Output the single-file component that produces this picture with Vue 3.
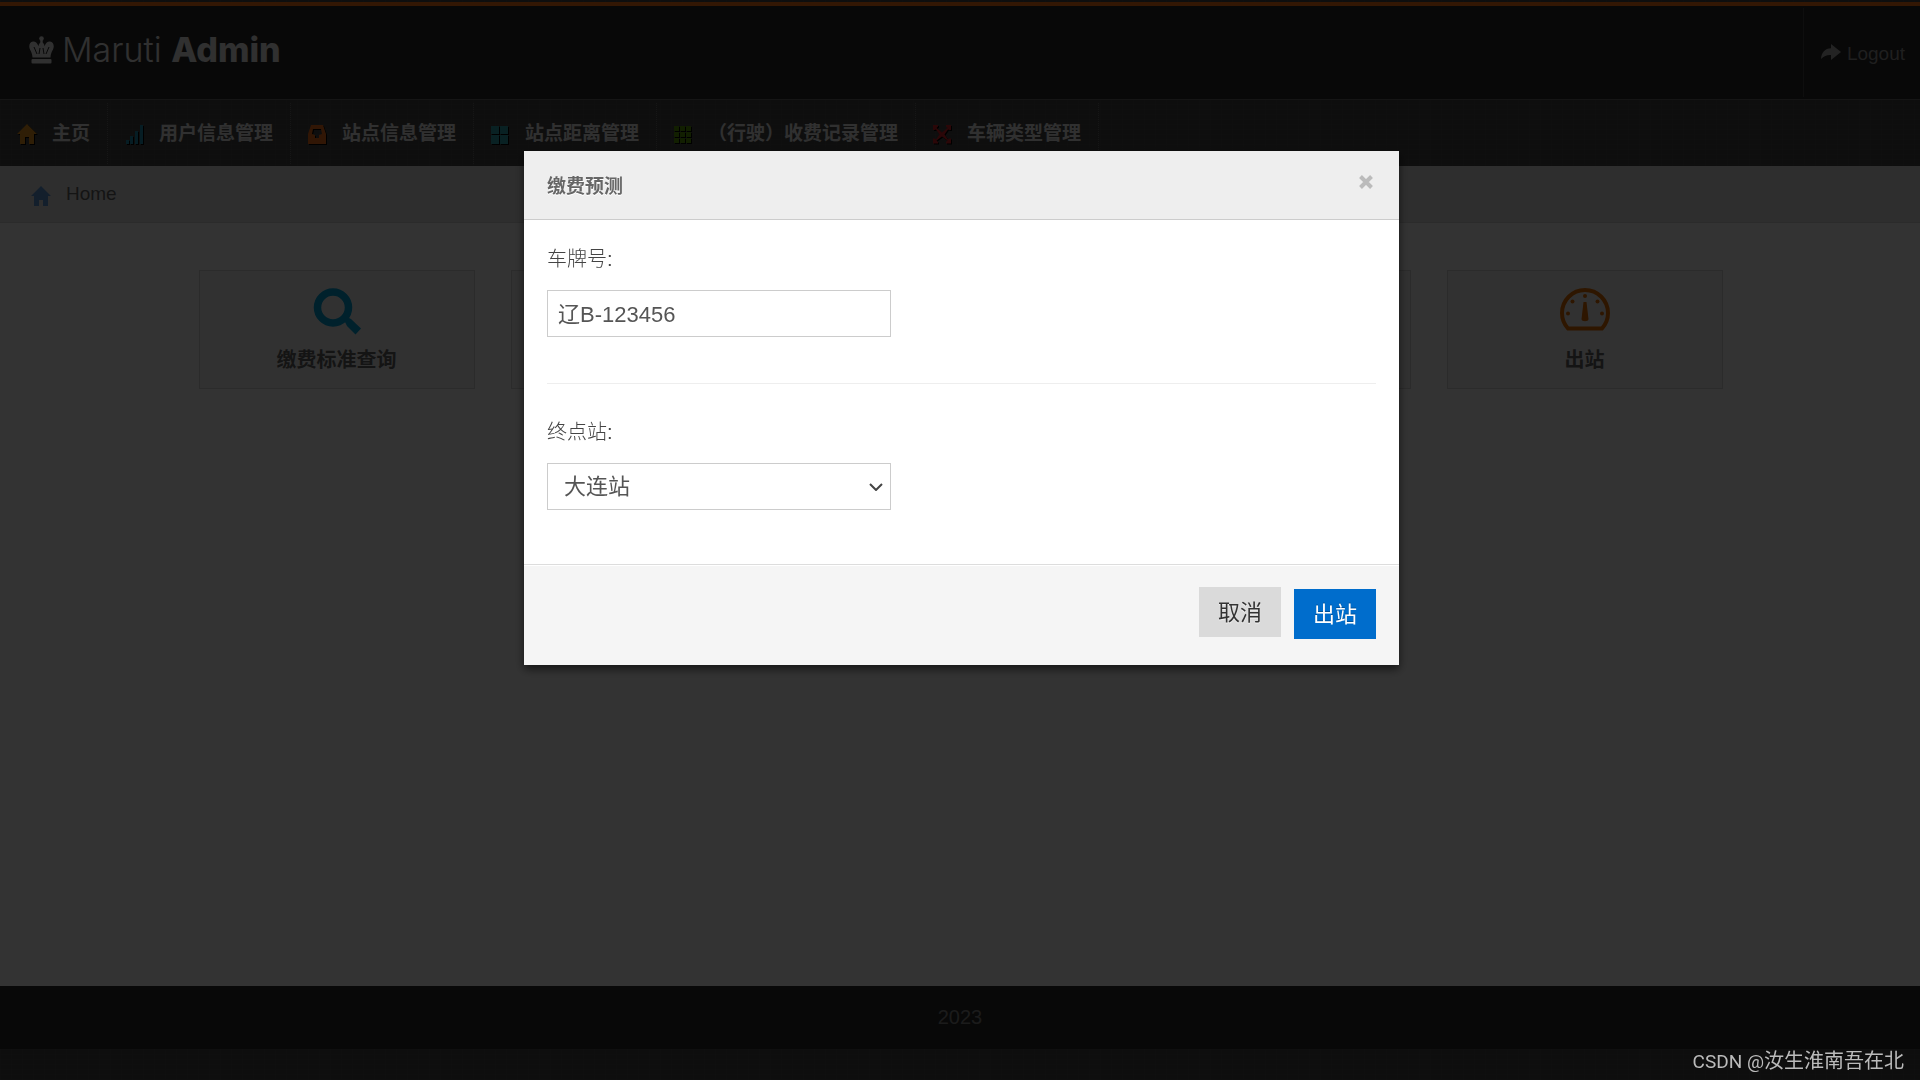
<script setup>
import { ref } from 'vue'

const navItems = [
  { label: '主页', icon: 'home' },
  { label: '用户信息管理', icon: 'signal' },
  { label: '站点信息管理', icon: 'inbox' },
  { label: '站点距离管理', icon: 'grid4' },
  { label: '（行驶）收费记录管理', icon: 'grid9' },
  { label: '车辆类型管理', icon: 'expand' }
]

const tiles = [
  { label: '缴费标准查询', icon: 'search' },
  {},
  {},
  {},
  { label: '出站', icon: 'gauge' }
]

const plate = ref('辽B-123456')
const stations = ['大连站']
const station = ref('大连站')
</script>

<template>
  <div class="page">
    <header class="header">
      <h1 class="logo">
        <svg class="crown" viewBox="0 0 25 28" aria-hidden="true">
          <circle cx="12.5" cy="2.5" r="2.3" />
          <path d="M11.3 3h2.4v5h-2.4z" />
          <path d="M12.5 6c2 1 3 2.600 3 4.200C17 6.500 19 5.200 21 5.500c3 .4 4.300 3.500 3.500 6.500-.7 2.700-2.700 4.300-3 9.500h-18C3.200 16.300 1.200 14.700.5 12-.3 9 1 5.900 4 5.500c2-.3 4 1 5.500 4.700C9.500 8.600 10.500 7 12.500 6z" />
          <path class="cut" d="M5 11l3 7M11 12l-1 6M14 12l1 6M20 11l-3 7" />
          <rect x="2.500" y="23" width="20" height="4.500" rx="1" />
        </svg>
        <span>Maruti <b>Admin</b></span>
      </h1>
      <a class="logout" href="#">
        <svg viewBox="0 0 20 16" aria-hidden="true">
          <path d="M10 0l10 8-10 8v-5c-4-.2-7 .8-10 4C.5 8 4 4.500 10 4.200z" />
        </svg>
        Logout
      </a>
    </header>

    <nav class="nav">
      <a v-for="item in navItems" :key="item.label" class="nav-item" href="#">
        <svg :class="['nav-icon', item.icon]" viewBox="0 0 20 20" aria-hidden="true">
          <path v-if="item.icon === 'home'" d="M10 0l10 10h-3v10h-5v-7H8v7H3V10H0z" />
          <path v-else-if="item.icon === 'signal'" d="M2 16h3v4H2zM6 12h3v8H6zM11 7h3v13h-3zM16 1h3v19h-3z" />
          <path v-else-if="item.icon === 'inbox'" fill-rule="evenodd" d="M4 1h12l3 9v10H1V10zM6 5L5 10l3 1v3h4v-3l3-1-1-5z" />
          <path v-else-if="item.icon === 'grid4'" d="M1 2h8v8H1zM10 2h8v8h-8zM1 11h8v9H1zM10 11h8v9h-8z" />
          <path v-else-if="item.icon === 'grid9'" d="M1 2h5v5H1zM7 2h5v5H7zM13 2h5v5h-5zM1 8h5v5H1zM7 8h5v5H7zM13 8h5v5h-5zM1 14h5v5H1zM7 14h5v5H7zM13 14h5v5h-5z" />
          <path v-else d="M1 1h5v1.500L4.500 4 10 8.500 15.500 4 14 2.500V1h5v5h-1.500L16 5.500 12.500 10.500 16 15.500l1.500-1H19v5h-5V18l1.500-1.500L10 12.500l-5.500 4L6 18v1.500H1v-5h1.500l1.500 1 3.500-5L4 5.500 2.500 6H1z" />
        </svg>
        {{ item.label }}
      </a>
    </nav>

    <div class="breadcrumb">
      <a href="#">
        <svg class="crumb-icon" viewBox="0 0 20 20" aria-hidden="true">
          <path d="M10 0l10 10h-3v10h-5v-6H8v6H3V10H0z" />
        </svg>
        Home
      </a>
    </div>

    <main class="content">
      <ul class="tiles">
        <li v-for="(tile, i) in tiles" :key="i" class="tile">
          <a v-if="tile.label" href="#">
            <svg v-if="tile.icon === 'search'" class="tile-icon" viewBox="0 0 50 50" aria-hidden="true">
              <circle cx="21" cy="21.500" r="15.500" fill="none" stroke="#00a3d9" stroke-width="7.500" />
              <path d="M32 34l3-3 4 2 10 9.500-5.500 6L35 40z" fill="#00a3d9" />
            </svg>
            <svg v-else class="tile-icon" viewBox="0 0 50 50" aria-hidden="true">
              <path d="M8 42.500C4 38 2 32.500 2 27a23 23 0 0 1 46 0c0 5.500-2 11-6 15.500z" fill="none" stroke="#e66f00" stroke-width="4" />
              <path d="M23.500 16h3l2 17c.2 3-7.200 3-7 0z" fill="#e66f00" />
              <g fill="#e66f00">
                <circle cx="25" cy="10" r="2" />
                <circle cx="12.500" cy="15.500" r="2" />
                <circle cx="37.500" cy="15.500" r="2" />
                <circle cx="8" cy="27.500" r="2" />
                <circle cx="42" cy="27.500" r="2" />
              </g>
            </svg>
            {{ tile.label }}
          </a>
        </li>
      </ul>
    </main>

    <footer class="footer">2023</footer>
  </div>

  <div class="backdrop"></div>

  <form class="modal" role="dialog" aria-labelledby="modal-title" @submit.prevent>
    <div class="modal-header">
      <h2 id="modal-title">缴费预测</h2>
      <button class="close" type="button" aria-label="关闭">
        <svg viewBox="0 0 14 14" aria-hidden="true"><path d="M1.500 1.500l11 11M12.500 1.500l-11 11" /></svg>
      </button>
    </div>
    <div class="modal-body">
      <label for="plate">车牌号:</label>
      <input id="plate" v-model="plate" class="control" type="text" />
      <hr />
      <label for="station">终点站:</label>
      <div class="select-wrap">
        <select id="station" v-model="station" class="control">
          <option v-for="s in stations" :key="s">{{ s }}</option>
        </select>
        <svg class="chevron" viewBox="0 0 14 8" aria-hidden="true"><path d="M1 1l6 6 6-6" /></svg>
      </div>
    </div>
    <div class="modal-footer">
      <button class="btn" type="button">取消</button>
      <button class="btn primary" type="submit">出站</button>
    </div>
  </form>

  <div class="watermark"><span>CSDN @</span>汝生淮南吾在北</div>
</template>

<style>
body {
  background: #484848;
}
</style>

<style scoped>
.page,
.modal,
.watermark {
  font-family: "Liberation Sans", "Noto Sans CJK SC", sans-serif;
  box-sizing: border-box;
}

.page {
  display: flex;
  flex-direction: column;
  min-height: 100vh;
  padding: 2px 0 31px;
  background-color: #484848;
  background-image:
    repeating-linear-gradient(0deg, rgba(255, 255, 255, 0.02) 0 1px, transparent 1px 5px),
    repeating-linear-gradient(90deg, rgba(255, 255, 255, 0.02) 0 1px, transparent 1px 11px);
}

a {
  color: inherit;
  text-decoration: none;
}

.header {
  display: flex;
  justify-content: space-between;
  height: 93px;
  border-top: 4px solid #ff7614;
  border-bottom: 1px solid #686868;
  background: #282828;
}

.logo {
  display: flex;
  align-items: center;
  gap: 8px;
  margin: 0 0 6px 29px;
  font-family: Inter, sans-serif;
  font-size: 34px;
  font-weight: 300;
  color: #efefef;
}

.logo b {
  font-weight: 800;
}

.crown {
  width: 25px;
  height: 28px;
  fill: #efefef;
}

.crown .cut {
  fill: none;
  stroke: #282828;
  stroke-width: 1;
}

.logout {
  display: flex;
  align-items: center;
  gap: 6px;
  margin: 2px 0;
  padding: 2px 15px 0 17px;
  border-left: 1px solid #484848;
  font-size: 19px;
  color: #999;
}

.logout svg {
  width: 20px;
  height: 16px;
  margin-bottom: 4px;
  fill: #b0b0b0;
}

.nav {
  display: flex;
  height: 66px;
  padding-left: 1px;
}

.nav-item {
  display: flex;
  align-items: center;
  gap: 15px;
  margin: 3px 0 2px;
  padding: 0 17px 4px 16px;
  border-right: 1px dotted #707070;
  font-size: 19px;
  font-weight: 700;
  color: #efefef;
}

.nav-icon {
  width: 20px;
  height: 20px;
  margin-top: 5px;
  filter: drop-shadow(1px 1px 0 #000);
}

.home { fill: #e8961e; }
.signal { fill: #1e91b4; }
.inbox { fill: #f2711c; }
.grid4 { fill: #2fa6ae; }
.grid9 { fill: #5a9a08; }
.expand { fill: #d8232a; }

.breadcrumb {
  height: 56px;
  border-bottom: 1px solid #d8d8d8;
  background: #e6e6e6;
}

.breadcrumb a {
  display: inline-flex;
  align-items: center;
  gap: 15px;
  height: 56px;
  padding-left: 31px;
  font-size: 19px;
  color: #666;
}

.crumb-icon {
  width: 20px;
  height: 20px;
  margin-top: 4px;
  fill: #5f9bdc;
}

.content {
  flex: 1;
  padding-top: 47px;
  background: #fff;
}

.tiles {
  display: flex;
  justify-content: center;
  gap: 36px;
  margin: 0;
  padding: 0 0 0 1px;
  list-style: none;
}

.tile {
  box-sizing: border-box;
  width: 276px;
  height: 119px;
  border: 1px solid #d8d8d8;
  background: #f5f5f5;
}

.tile a {
  display: flex;
  flex-direction: column;
  align-items: center;
  padding-top: 15px;
  font-size: 20px;
  font-weight: 700;
  line-height: 24px;
  color: #666;
}

.tile-icon {
  width: 50px;
  height: 50px;
  margin-bottom: 12px;
}

.footer {
  height: 63px;
  background: #282828;
  font-size: 20px;
  line-height: 62px;
  text-align: center;
  color: #888;
}

.backdrop {
  position: fixed;
  inset: 0;
  background: rgba(0, 0, 0, 0.8);
}

.modal {
  position: fixed;
  top: 151px;
  left: 50%;
  width: 875px;
  margin-left: -436px;
  background: #fff;
  box-shadow: 0 4px 9px rgba(0, 0, 0, 0.6);
}

.modal-header {
  display: flex;
  justify-content: space-between;
  align-items: flex-start;
  height: 68px;
  padding: 0 23px;
  border-bottom: 1px solid #ccc;
  background: #eee;
}

.modal-header h2 {
  margin: 0;
  font-size: 19px;
  line-height: 72px;
  color: #666;
  text-shadow: 0 1px 0 #fff;
}

.close {
  width: 20px;
  height: 20px;
  margin-top: 21px;
  padding: 3px;
  border: 0;
  background: none;
}

.close svg {
  display: block;
  width: 14px;
  height: 14px;
  fill: none;
  stroke: #bbb;
  stroke-width: 4;
}

.modal-body {
  padding: 24px 23px 54px;
}

.modal-body label {
  display: block;
  margin-bottom: 16px;
  font-size: 20px;
  font-weight: 300;
  line-height: 30px;
  color: #444;
}

.control {
  display: block;
  box-sizing: border-box;
  width: 344px;
  height: 47px;
  padding: 0 10px 4px;
  border: 1px solid #ccc;
  border-radius: 0;
  background: #fff;
  font: 22px "Liberation Sans", "Noto Sans CJK SC", sans-serif;
  color: #555;
}

.modal-body hr {
  margin: 46px 0 33px;
  border: 0;
  border-top: 1px solid #eee;
}

.select-wrap {
  position: relative;
  width: 344px;
}

.select-wrap .control {
  appearance: none;
  padding: 0 16px;
}

.chevron {
  position: absolute;
  top: 20px;
  right: 8px;
  width: 14px;
  height: 8px;
  fill: none;
  stroke: #444;
  stroke-width: 2;
  pointer-events: none;
}

.modal-footer {
  display: flex;
  justify-content: flex-end;
  align-items: flex-start;
  gap: 13px;
  height: 78px;
  padding: 22px 23px 0;
  border-top: 1px solid #ddd;
  background: #f5f5f5;
  box-shadow: inset 0 1px 0 #fff;
}

.btn {
  width: 82px;
  height: 50px;
  padding: 0 0 4px;
  border: 0;
  background: #dadada;
  font: 22px "Liberation Sans", "Noto Sans CJK SC", sans-serif;
  color: #333;
  text-shadow: 0 1px 1px rgba(255, 255, 255, 0.75);
}

.btn.primary {
  margin-top: 2px;
  background: #006dcc;
  color: #fff;
  text-shadow: 0 -1px 0 rgba(0, 0, 0, 0.25);
}

.watermark {
  position: fixed;
  right: 16px;
  bottom: 3px;
  font-size: 20px;
  line-height: 30px;
  color: #bbb;
}

.watermark span {
  font-family: Roboto, sans-serif;
  font-size: 19px;
}
</style>
